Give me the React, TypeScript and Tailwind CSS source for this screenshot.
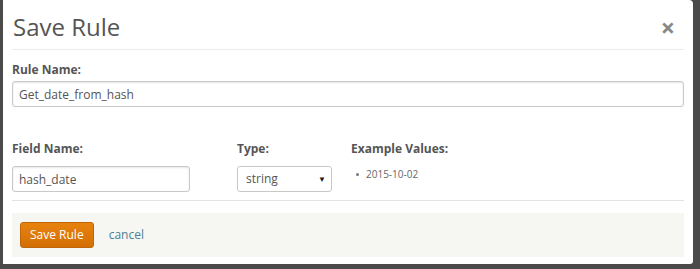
function Label({ children }: { children: React.ReactNode }) {
  return <div className="text-[12px] font-bold text-[#555] leading-[16px]">{children}</div>
}

export default function App() {
  return (
    <div
      className="w-[700px] h-[269px] bg-[#4a4a4a] pl-[3px] pr-[7px] pb-[5px] overflow-hidden"
      style={{ fontFamily: '"Open Sans", "Liberation Sans", sans-serif' }}
    >
      <div className="h-full bg-white rounded-br-[3px] rounded-tr-[4px] px-[9px] flex flex-col">
        {/* Header */}
        <div className="h-[50px] shrink-0 border-b border-[#ececec] flex items-center justify-between">
          <h1 className="text-[24px] text-[#555] leading-none mt-[5px] pl-[1px]">Save Rule</h1>
          <span className="text-[25px] font-bold text-[#888] leading-none mr-[9px] mt-[5px]">×</span>
        </div>

        {/* Rule name */}
        <div className="pt-[12px]">
          <Label>Rule Name:</Label>
          <input
            readOnly
            value="Get_date_from_hash"
            className="mt-[3px] w-[672px] h-[26px] border border-[#c8c8c8] rounded-[3px] px-[6px] text-[12px] text-[#555] shadow-[inset_0_1px_2px_rgba(0,0,0,0.1)] outline-none"
          />
        </div>

        {/* Field row */}
        <div className="flex pt-[34px] h-[94px] shrink-0 border-b border-[#e3e3e3]">
          <div className="w-[225px]">
            <Label>Field Name:</Label>
            <input
              readOnly
              value="hash_date"
              className="mt-[9px] w-[178px] h-[26px] border border-[#c8c8c8] rounded-[3px] px-[6px] text-[12px] text-[#555] shadow-[inset_0_1px_2px_rgba(0,0,0,0.1)] outline-none"
            />
          </div>
          <div className="w-[114px]">
            <Label>Type:</Label>
            <div className="mt-[9px] w-[95px] h-[26px] border border-[#c8c8c8] rounded-[3px] pl-[8px] pr-[5px] flex items-center justify-between text-[12px] text-[#555]">
              <span>string</span>
              <span className="text-[8px] text-[#222]">▼</span>
            </div>
          </div>
          <div>
            <Label>Example Values:</Label>
            <ul className="mt-[10px] pl-[5px] text-[10px] text-[#666]">
              <li className="flex items-center gap-[7px]">
                <span className="w-[3px] h-[3px] rounded-full bg-[#777]" />
                2015-10-02
              </li>
            </ul>
          </div>
        </div>

        {/* Footer */}
        <div className="mt-[12px] h-[44px] shrink-0 bg-[#f6f6f2] flex items-center px-[8px] gap-[15px]">
          <button className="h-[26px] px-[9px] rounded-[3px] bg-gradient-to-b from-[#e8820e] to-[#d46f05] border border-[#c0660a] text-white text-[12px]">
            Save Rule
          </button>
          <span className="text-[12px] text-[#4a7f95]">cancel</span>
        </div>
      </div>
    </div>
  )
}
